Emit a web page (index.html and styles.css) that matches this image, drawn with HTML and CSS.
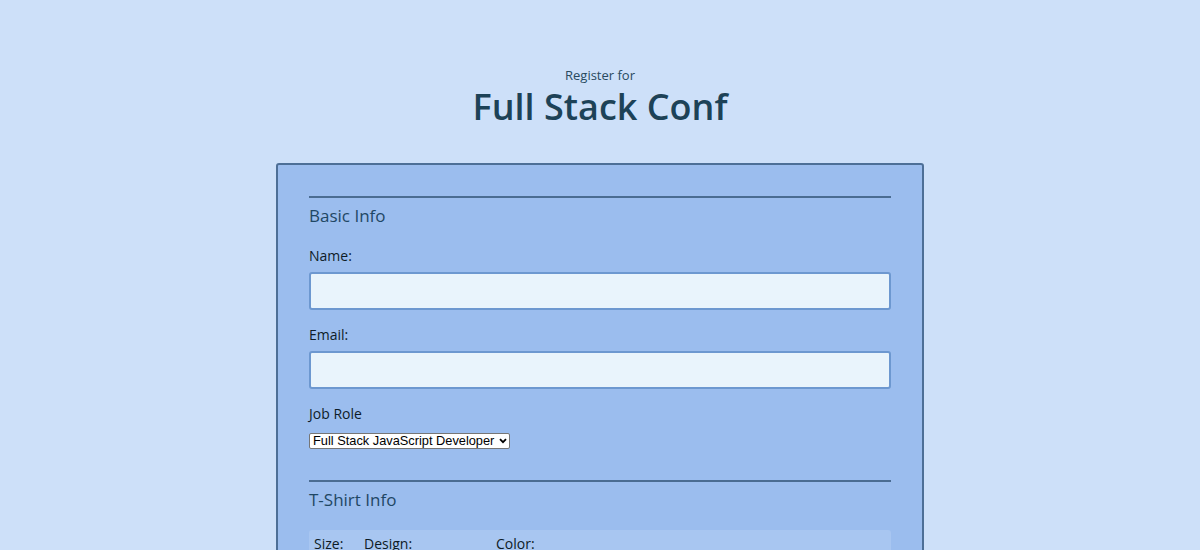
FILE: index.html
```html
<!DOCTYPE html>
<html>
<head>
<meta charset="utf-8">
<link rel="stylesheet" href="styles.css">
</head>
<body>
<header class="header">
  <p class="pre">Register for</p>
  <h1 class="title">Full Stack Conf</h1>
</header>
<form class="form">
  <section class="section">
    <h2 class="legend">Basic Info</h2>
    <label class="label label-first" for="name">Name:</label>
    <input class="text" id="name" type="text">
    <label class="label" for="mail">Email:</label>
    <input class="text" id="mail" type="email">
    <label class="label" for="title">Job Role</label>
    <span class="select-wrap">
      <select class="select" id="title">
        <option>Full Stack JavaScript Developer</option>
      </select>
      <svg class="chev" width="8" height="6" viewBox="0 0 8 6"><path d="M1 1.2 L4 4.2 L7 1.2" fill="none" stroke="#000" stroke-width="1.8"/></svg>
    </span>
  </section>
  <section class="section">
    <h2 class="legend">T-Shirt Info</h2>
    <div class="shirt">
      <span class="size">Size:</span>
      <span class="design">Design:</span>
      <span class="color">Color:</span>
    </div>
  </section>
</form>
</body>
</html>
```
FILE: styles.css
```css
html, body {
  margin: 0;
  padding: 0;
  background: #cde0f9;
  font-family: "Open Sans", "Lato", sans-serif;
  color: #0d1b26;
}
.header {
  text-align: center;
  padding-top: 67px;
}
.pre {
  margin: 0;
  font-size: 13px;
  color: #284a60;
  line-height: 16px;
}
.title {
  margin: 1px 0 0;
  font-size: 36px;
  font-weight: 600;
  color: #1d4257;
  line-height: 46px;
}
.form {
  width: 644px;
  margin: 33px auto 0;
  border: 2px solid #4d6f97;
  border-radius: 3px;
  background: #9bbdee;
  padding: 31px 0 0;
  box-sizing: content-box;
}
.section {
  margin: 0 31px;
  border-top: 2px solid #4a6c92;
  display: flex;
  flex-direction: column;
  align-items: flex-start;
  padding-bottom: 31px;
}
.legend {
  margin: 8px 0 0;
  font-size: 17px;
  font-weight: 500;
  color: #1f4764;
  line-height: 20px;
}
.label {
  margin-top: 16px;
  font-size: 14px;
  line-height: 16px;
  color: #0e1c28;
}
.label-first {
  margin-top: 22px;
}
.text {
  margin-top: 8px;
  width: 100%;
  height: 38px;
  box-sizing: border-box;
  background: #e9f4fc;
  border: 2px solid #6d98d0;
  border-radius: 3px;
  font-size: 14px;
}
.text + .label {
  margin-top: 17px;
}
.select-wrap {
  margin-top: 11px;
  position: relative;
  display: block;
  width: 201px;
  height: 16px;
}
.select {
  appearance: none;
  -webkit-appearance: none;
  display: block;
  width: 201px;
  height: 16px;
  box-sizing: border-box;
  margin: 0;
  font-family: "Liberation Sans", Arial, sans-serif;
  font-size: 12.8px;
  line-height: 14px;
  padding: 0 0 0 3px;
  background: #fff;
  color: #000;
  border: 1px solid #767676;
  border-radius: 2px;
}
.chev {
  position: absolute;
  right: 3px;
  top: 5px;
  pointer-events: none;
}
.shirt {
  margin-top: 20px;
  width: 100%;
  background: #a8c6f1;
  border-radius: 3px;
  padding: 6px 5px;
  box-sizing: border-box;
  display: flex;
  font-size: 14px;
  line-height: 16px;
}
.size { width: 50px; }
.design { width: 132px; }
```
